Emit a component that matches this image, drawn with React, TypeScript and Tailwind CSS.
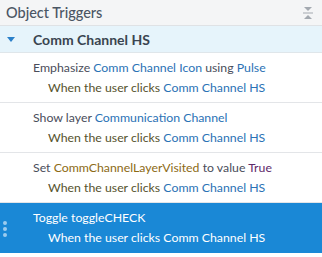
import React from 'react'

const blue = 'text-[#2a72b5]'

const Trigger = ({ action, selected }: { action: React.ReactNode; selected?: boolean }) => {
  return (
    <div
      className={
        'relative h-[50px] border-b pl-[33px] pt-[5px] ' +
        (selected ? 'bg-[#1a88d6] border-[#1a88d6] text-white' : 'border-[#e3e5e8] text-[#4a4d5a]')
      }
    >
      {selected && (
        <div className="absolute left-[3px] top-[18px] flex flex-col gap-[2px]">
          <span className="w-[4px] h-[4px] rounded-full bg-[#9ccbee]" />
          <span className="w-[4px] h-[4px] rounded-full bg-[#9ccbee]" />
          <span className="w-[4px] h-[4px] rounded-full bg-[#9ccbee]" />
        </div>
      )}
      <div className="leading-[20px]">{action}</div>
      <div className="pl-[15px] leading-[20px]">
        <span className={selected ? 'text-white' : 'text-[#56532e]'}>When the user clicks </span>
        <span className={selected ? 'text-white' : blue}>Comm Channel HS</span>
      </div>
    </div>
  )
}

const App = () => {
  return (
    <div
      className="w-[322px] h-[257px] bg-white overflow-hidden text-[12.3px]"
      style={{ fontFamily: 'Lato, "Noto Sans", sans-serif' }}
    >
      <div className="h-[26px] flex items-center justify-between pl-[6px] pr-[9px] bg-[#f4f5f6] border-b border-[#dfe2e5]">
        <span className="text-[14.5px] font-medium text-[#4a5664]">Object Triggers</span>
        <svg width="10" height="14" viewBox="0 0 10 14" className="text-[#a3a9b0]">
          <path d="M1 1h8L5 5z" fill="currentColor" />
          <rect x="0" y="6.5" width="10" height="1" fill="currentColor" />
          <path d="M1 13h8L5 9z" fill="currentColor" />
        </svg>
      </div>
      <div className="h-[27px] flex items-center bg-[#e6f4fb] border-b border-[#dfe6ea]">
        <svg width="8" height="5" viewBox="0 0 8 5" className="ml-[7px] text-[#2b80c9]">
          <path d="M0 0h8L4 5z" fill="currentColor" />
        </svg>
        <span className="ml-[18px] font-bold text-[14px] text-[#3a4450]">Comm Channel HS</span>
      </div>
      <Trigger
        action={
          <>
            Emphasize <span className={blue}>Comm Channel Icon</span> using <span className={blue}>Pulse</span>
          </>
        }
      />
      <Trigger
        action={
          <>
            Show layer <span className={blue}>Communication Channel</span>
          </>
        }
      />
      <Trigger
        action={
          <>
            Set <span className="text-[#8c6a14]">CommChannelLayerVisited</span> to value{' '}
            <span className="text-[#5e2a6a]">True</span>
          </>
        }
      />
      <Trigger selected action={<>Toggle toggleCHECK</>} />
    </div>
  )
}

export default App
